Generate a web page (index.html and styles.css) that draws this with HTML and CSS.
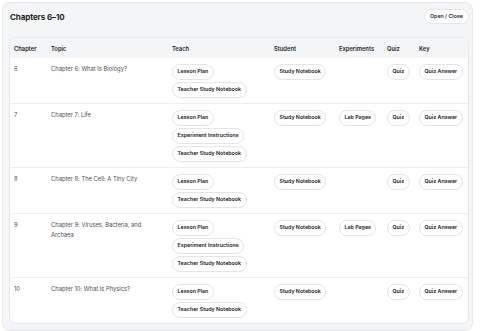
FILE: index.html
```html
<!DOCTYPE html>
<html>
<head>
<meta charset="utf-8">
<link rel="stylesheet" href="styles.css">
</head>
<body>
<section class="panel">
  <header class="panel-head">
    <h2 class="panel-title">Chapters 6–10</h2>
    <button class="toggle">Open / Close</button>
  </header>
  <div class="table-card">
    <table class="chapters">
      <colgroup>
        <col class="c-ch"><col class="c-topic"><col class="c-teach"><col class="c-student"><col class="c-exp"><col class="c-quiz"><col class="c-key">
      </colgroup>
      <thead>
        <tr><th>Chapter</th><th>Topic</th><th>Teach</th><th>Student</th><th>Experiments</th><th>Quiz</th><th>Key</th></tr>
      </thead>
      <tbody>
        <tr>
          <td>6</td><td>Chapter 6: What Is Biology?</td>
          <td><div class="pills"><span class="pill">Lesson Plan</span><span class="pill">Teacher Study Notebook</span></div></td>
          <td><div class="pills"><span class="pill">Study Notebook</span></div></td>
          <td></td>
          <td><div class="pills"><span class="pill">Quiz</span></div></td>
          <td><div class="pills"><span class="pill">Quiz Answer</span></div></td>
        </tr>
        <tr>
          <td>7</td><td>Chapter 7: Life</td>
          <td><div class="pills"><span class="pill">Lesson Plan</span><span class="pill">Experiment Instructions</span><span class="pill">Teacher Study Notebook</span></div></td>
          <td><div class="pills"><span class="pill">Study Notebook</span></div></td>
          <td><div class="pills"><span class="pill">Lab Pages</span></div></td>
          <td><div class="pills"><span class="pill">Quiz</span></div></td>
          <td><div class="pills"><span class="pill">Quiz Answer</span></div></td>
        </tr>
        <tr>
          <td>8</td><td>Chapter 8: The Cell: A Tiny City</td>
          <td><div class="pills"><span class="pill">Lesson Plan</span><span class="pill">Teacher Study Notebook</span></div></td>
          <td><div class="pills"><span class="pill">Study Notebook</span></div></td>
          <td></td>
          <td><div class="pills"><span class="pill">Quiz</span></div></td>
          <td><div class="pills"><span class="pill">Quiz Answer</span></div></td>
        </tr>
        <tr>
          <td>9</td><td>Chapter 9: Viruses, Bacteria, and Archaea</td>
          <td><div class="pills"><span class="pill">Lesson Plan</span><span class="pill">Experiment Instructions</span><span class="pill">Teacher Study Notebook</span></div></td>
          <td><div class="pills"><span class="pill">Study Notebook</span></div></td>
          <td><div class="pills"><span class="pill">Lab Pages</span></div></td>
          <td><div class="pills"><span class="pill">Quiz</span></div></td>
          <td><div class="pills"><span class="pill">Quiz Answer</span></div></td>
        </tr>
        <tr>
          <td>10</td><td>Chapter 10: What Is Physics?</td>
          <td><div class="pills"><span class="pill">Lesson Plan</span><span class="pill">Teacher Study Notebook</span></div></td>
          <td><div class="pills"><span class="pill">Study Notebook</span></div></td>
          <td></td>
          <td><div class="pills"><span class="pill">Quiz</span></div></td>
          <td><div class="pills"><span class="pill">Quiz Answer</span></div></td>
        </tr>
      </tbody>
    </table>
  </div>
</section>
</body>
</html>
```
FILE: styles.css
```css
* { box-sizing: border-box; }
html, body { margin: 0; padding: 0; background: #ffffff; }
body {
  padding: 2px 7px 3px 2px;
  font-family: Inter, "Liberation Sans", sans-serif;
  color: #1f2328;
}
.panel {
  background: #f4f5f6;
  border: 1px solid #e6e8eb;
  border-radius: 8px;
  padding: 0 3px 6px 6px;
}
.panel-head {
  height: 28px;
  display: flex;
  align-items: center;
  justify-content: space-between;
  padding: 0 0 0 1px;
}
.panel-title {
  margin: 0;
  font-size: 8px;
  font-weight: 700;
  letter-spacing: -0.1px;
  color: #1b1f24;
}
.toggle {
  font-family: inherit;
  font-size: 5.3px;
  font-weight: 600;
  color: #2a2e33;
  background: #ffffff;
  border: 1px solid #e3e5e8;
  border-radius: 999px;
  height: 15px;
  padding: 0 5px;
  margin: -2px 0 0 0;
}
.table-card {
  margin-top: 6px;
  background: #ffffff;
  border: 1px solid #e6e8eb;
  border-radius: 7px;
  overflow: hidden;
}
.chapters {
  width: 100%;
  border-collapse: collapse;
  table-layout: fixed;
}
.c-ch { width: 37px; }
.c-topic { width: 121px; }
.c-teach { width: 102px; }
.c-student { width: 65px; }
.c-exp { width: 48px; }
.c-quiz { width: 32px; }
.c-key { width: auto; }
.chapters th {
  background: #f4f5f7;
  height: 20px;
  text-align: left;
  font-size: 5.8px;
  font-weight: 600;
  color: #22262b;
  padding: 0 0 0 4px;
  vertical-align: middle;
}
.chapters td {
  vertical-align: top;
  padding: 6px 8px 5px 4px;
  font-size: 5.8px;
  line-height: 10px;
  color: #4b5058;
  border-top: 1px solid #eceef1;
}
.chapters tbody tr:first-child td { border-top: none; }
.pills {
  display: flex;
  flex-direction: column;
  align-items: flex-start;
  gap: 2px;
}
.pill {
  display: inline-flex;
  align-items: center;
  height: 16px;
  padding: 0 4.5px;
  border: 1px solid #e3e5e8;
  border-radius: 999px;
  background: #ffffff;
  font-size: 5.3px;
  font-weight: 600;
  color: #16191d;
  white-space: nowrap;
  line-height: 1;
}
```
